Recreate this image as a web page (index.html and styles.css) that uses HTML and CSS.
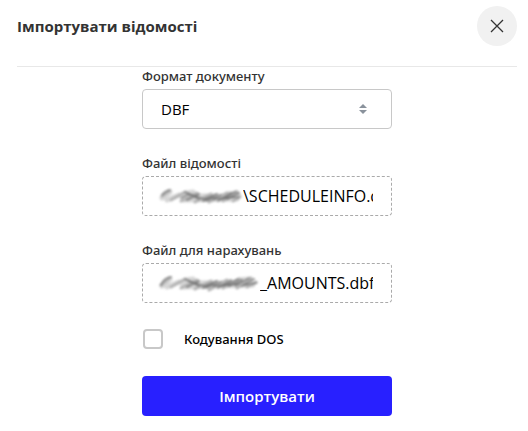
FILE: index.html
```html
<!DOCTYPE html>
<html lang="uk">
	<head>
		<meta charset="UTF-8">
		<title>Імпортувати відомості</title>
		<link rel="stylesheet" href="styles.css">
	</head>
	<body>
		<div class="modal">
			<header class="modal-header">
				<h1 class="modal-title">Імпортувати відомості</h1>
				<button class="close" type="button" aria-label="Закрити">
					<svg width="14" height="14" viewBox="0 0 14 14" fill="none" stroke="#333" stroke-width="1.3">
						<path d="M1 1L13 13M13 1L1 13" />
					</svg>
				</button>
			</header>
			<form class="form">
				<div class="field">
					<label class="label" for="format">Формат документу</label>
					<div class="select-box">
						<select class="select" id="format" name="format">
							<option>DBF</option>
						</select>
						<svg class="arrows" width="8" height="10" viewBox="0 0 8 10" fill="#8a929c">
							<path d="M4 0L8 4H0ZM0 6H8L4 10Z" />
						</svg>
					</div>
				</div>
				<div class="field">
					<label class="label" for="info">Файл відомості</label>
					<div class="file-box">
						<!-- hidden part of the path -->
						<svg class="smudge" width="84" height="20" viewBox="0 0 84 20" fill="none" stroke-linecap="round">
							<path stroke="#d6d6d6" stroke-width="5" d="M3 12L11 6M8 14L20 9M22 10H80M24 14L78 13M28 7L34 6M68 8L78 7" />
							<path stroke="#b4b4b4" stroke-width="3" d="M3 10L10 5M12 14L26 6M22 15L38 7M36 16L52 8M50 16L68 7M64 15L78 6M74 15L81 11" />
							<path stroke="#8c8c8c" stroke-width="2" d="M3 9Q6 5 11 4M26 6L40 13M28 14L40 8M44 15L58 8M59 15L72 7M68 13L80 7" />
							<path stroke="#606060" stroke-width="1" d="M30 8L45 13L54 10M47 15L62 9M64 13L77 5M54 13L80 11M22 12L30 8" />
						</svg>
						<input class="file-input" id="info" name="info" type="text" value="\SCHEDULEINFO.dbf" readonly>
					</div>
				</div>
				<div class="field">
					<label class="label" for="amounts">Файл для нарахувань</label>
					<div class="file-box">
						<svg class="smudge" width="101" height="20" viewBox="0 0 101 20" fill="none" stroke-linecap="round">
							<path stroke="#d6d6d6" stroke-width="5" d="M3 13L11 6M8 14L20 9M22 10H92M24 14L94 12M28 7L34 6M80 7L90 6" />
							<path stroke="#b4b4b4" stroke-width="3" d="M2 12L10 5M12 14L26 6M22 15L38 7M36 16L52 8M50 17L68 7M64 15L80 6M78 15L92 5M88 14L97 9" />
							<path stroke="#8c8c8c" stroke-width="2" d="M2 12Q5 5 12 4M26 6L40 13M28 14L40 8M44 15L58 8M59 15L72 7M70 13L83 7M83 13L95 6" />
							<path stroke="#606060" stroke-width="1" d="M30 8L45 13L54 10M47 15L62 9M64 13L79 6M54 13L80 11M76 13L90 5M85 12L98 10" />
						</svg>
						<input class="file-input" id="amounts" name="amounts" type="text" value="_AMOUNTS.dbf" readonly>
					</div>
				</div>
				<div class="check">
					<input class="checkbox" id="dos" name="dos" type="checkbox">
					<label class="check-label" for="dos">Кодування DOS</label>
				</div>
				<button class="submit" type="submit">Імпортувати</button>
			</form>
		</div>
	</body>
</html>
```

FILE: styles.css
```css
* {
	box-sizing: border-box;
}

body {
	margin: 0;
	background: #fff;
	color: #333;
	font-family: "Open Sans", "Noto Sans", sans-serif;
	font-size: 13px;
}

.modal {
	padding: 6px 11px 15px 17px;
}

.modal-header {
	display: flex;
	justify-content: space-between;
	align-items: flex-start;
	height: 61px;
	border-bottom: 1px solid #e8e8e8;
}

.modal-title {
	margin: 0;
	font-size: 15px;
	font-weight: 700;
	line-height: 40px;
}

.close {
	display: flex;
	align-items: center;
	justify-content: center;
	width: 40px;
	height: 40px;
	padding: 0;
	border: 0;
	border-radius: 50%;
	background: #f1f1f1;
}

.form {
	width: 50%;
	min-width: 250px;
	margin: 0 auto;
}

.field {
	margin-bottom: 25px;
}

.label,
.check-label {
	font-family: "Noto Sans", "Open Sans", sans-serif;
	font-weight: 500;
}

.label {
	display: block;
	height: 22px;
	line-height: 18px;
}

.select-box {
	display: grid;
	align-items: center;
}

.select,
.arrows {
	grid-area: 1 / 1;
}

.select {
	width: 100%;
	height: 40px;
	padding: 0 18px;
	border: 1px solid #c8c8c8;
	border-radius: 4px;
	background: #fff;
	color: #000;
	font-family: inherit;
	font-size: 15px;
	appearance: none;
}

.arrows {
	justify-self: end;
	margin-right: 25px;
	pointer-events: none;
}

.file-box {
	display: flex;
	align-items: center;
	height: 40px;
	padding: 0 18px 0 16px;
	border: 1px dashed #aaa;
	border-radius: 4px;
}

.smudge {
	flex: none;
	filter: blur(1px);
}

.file-input {
	flex: 1;
	min-width: 0;
	height: 38px;
	padding: 0;
	border: 0;
	background: none;
	color: #000;
	font-family: inherit;
	font-size: 16px;
}

.check {
	display: flex;
	align-items: center;
	gap: 21px;
	height: 22px;
	margin-bottom: 26px;
}

.checkbox {
	width: 20px;
	height: 20px;
	margin: 0 0 0 1px;
	border: 2px solid #c8c8c8;
	border-radius: 4px;
	background: #fff;
	appearance: none;
}

.checkbox:checked {
	background: #2820ff;
}

.check-label {
	color: #000;
}

.submit {
	display: block;
	width: 100%;
	height: 40px;
	border: 0;
	border-radius: 4px;
	background: #2820ff;
	color: #fff;
	font-family: inherit;
	font-size: 15px;
	font-weight: 600;
}
```
